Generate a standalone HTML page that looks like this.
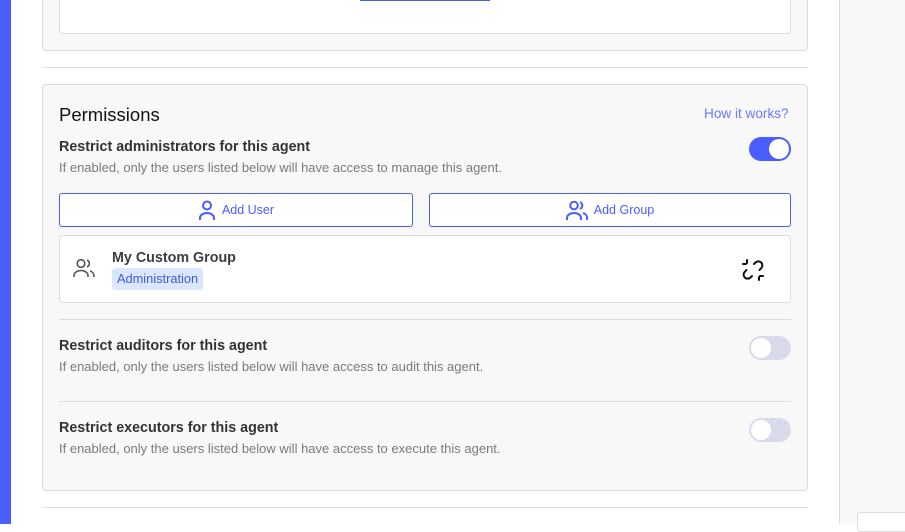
<!DOCTYPE html>
<html><head><meta charset="utf-8"><style>
*{box-sizing:border-box;margin:0;padding:0}
body{width:905px;height:524px;overflow:hidden;background:#fff;font-family:"Liberation Sans",sans-serif;position:relative}
.abs{position:absolute}
.bar{left:0;top:0;width:11px;height:524px;background:#4a5dff}
.right{left:839px;top:0;width:66px;height:524px;background:#f8f8f8;border-left:1px solid #dcdcdc}
.card{background:#f8f8f8;border:1px solid #dcdcdc;border-radius:4px}
.inner{background:#fff;border:1px solid #dcdcdc;border-radius:4px}
.hr{height:1px;background:#dedede}
.t{font-size:14.3px;font-weight:bold;color:#333}
.d{font-size:13px;color:#7a7a7a}
.tog{width:42px;height:24px;border-radius:12px;background:#d8dbec}
.tog::after{content:"";position:absolute;left:2px;top:2px;width:20px;height:20px;border-radius:50%;background:#fff}
.tog.on{background:#4a5dff}
.tog.on::after{left:20px}
.btn{height:34px;border:1px solid #4a5dff;border-radius:3px;background:#fff;display:flex;align-items:center;justify-content:center;color:#4a5dff;font-size:12.5px;gap:6px}
</style></head><body>
<div class="abs bar"></div>
<div class="abs right"></div>
<div class="abs" style="left:857px;top:512px;width:60px;height:20px;background:#fff;border:1px solid #dcdcdc;border-radius:4px"></div>

<div class="abs card" style="left:42px;top:-10px;width:766px;height:61px"></div>
<div class="abs inner" style="left:59px;top:-10px;width:732px;height:44px"></div>
<div class="abs" style="left:360px;top:0;width:130px;height:1px;background:#4a5dff"></div>
<div class="abs hr" style="left:42px;top:67px;width:766px"></div>

<div class="abs card" style="left:42px;top:84px;width:766px;height:407px"></div>
<div class="abs" style="left:59px;top:104px;font-size:18.5px;color:#111">Permissions</div>
<div class="abs" style="left:704px;top:106px;font-size:13.6px;color:#6b78ff">How it works?</div>
<div class="abs t" style="left:59px;top:139px">Restrict administrators for this agent</div>
<div class="abs d" style="left:59px;top:160px">If enabled, only the users listed below will have access to manage this agent.</div>
<div class="abs tog on" style="left:749px;top:137px"></div>

<div class="abs btn" style="left:59px;top:193px;width:354px">
<svg width="18" height="20" viewBox="0 0 18 20" fill="none" stroke="#4a5dff" stroke-width="2"><circle cx="9" cy="5.5" r="4"/><path d="M2 20v-2a7 5 0 0 1 14 0v2"/></svg>Add User</div>
<div class="abs btn" style="left:429px;top:193px;width:362px">
<svg width="22" height="20" viewBox="0 0 22 20" fill="none" stroke="#4a5dff" stroke-width="2"><circle cx="8" cy="5.5" r="3.8"/><path d="M1 20v-2a7 5 0 0 1 14 0v2"/><path d="M14 2a3.8 3.8 0 0 1 0 7"/><path d="M17 13a6 5 0 0 1 4 5v2"/></svg>Add Group</div>

<div class="abs inner" style="left:59px;top:235px;width:732px;height:68px"></div>
<svg class="abs" style="left:73px;top:258px" width="22" height="20" viewBox="0 0 22 20" fill="none" stroke="#555" stroke-width="1.6"><circle cx="8" cy="5.5" r="3.8"/><path d="M1 19v-1.5a7 5 0 0 1 14 0V19"/><path d="M14 2a3.8 3.8 0 0 1 0 7"/><path d="M17 13a6 5 0 0 1 4 5v1"/></svg>
<div class="abs t" style="left:112px;top:250px;color:#3d3d3d">My Custom Group</div>
<div class="abs" style="left:112px;top:268px;height:22px;padding:0 5px;background:#dbe6ff;border-radius:3px;color:#3a5cdd;font-size:12.8px;line-height:22px">Administration</div>
<svg class="abs" style="left:741px;top:258px" width="24" height="24" viewBox="0 0 24 24" fill="none" stroke="#111" stroke-width="2" stroke-linecap="round"><path d="M13 6l1.5-1.5a4 4 0 0 1 5.7 5.7L18.5 12"/><path d="M11 18l-1.5 1.5a4 4 0 0 1-5.7-5.7L5.5 12"/><path d="M6 2v3M2 6h3M18 22v-3M22 18h-3"/></svg>

<div class="abs hr" style="left:59px;top:319px;width:732px"></div>
<div class="abs t" style="left:59px;top:338px">Restrict auditors for this agent</div>
<div class="abs d" style="left:59px;top:359px">If enabled, only the users listed below will have access to audit this agent.</div>
<div class="abs tog" style="left:749px;top:336px"></div>

<div class="abs hr" style="left:59px;top:401px;width:732px"></div>
<div class="abs t" style="left:59px;top:420px">Restrict executors for this agent</div>
<div class="abs d" style="left:59px;top:441px">If enabled, only the users listed below will have access to execute this agent.</div>
<div class="abs tog" style="left:749px;top:418px"></div>

<div class="abs hr" style="left:42px;top:507px;width:766px"></div>
</body></html>
